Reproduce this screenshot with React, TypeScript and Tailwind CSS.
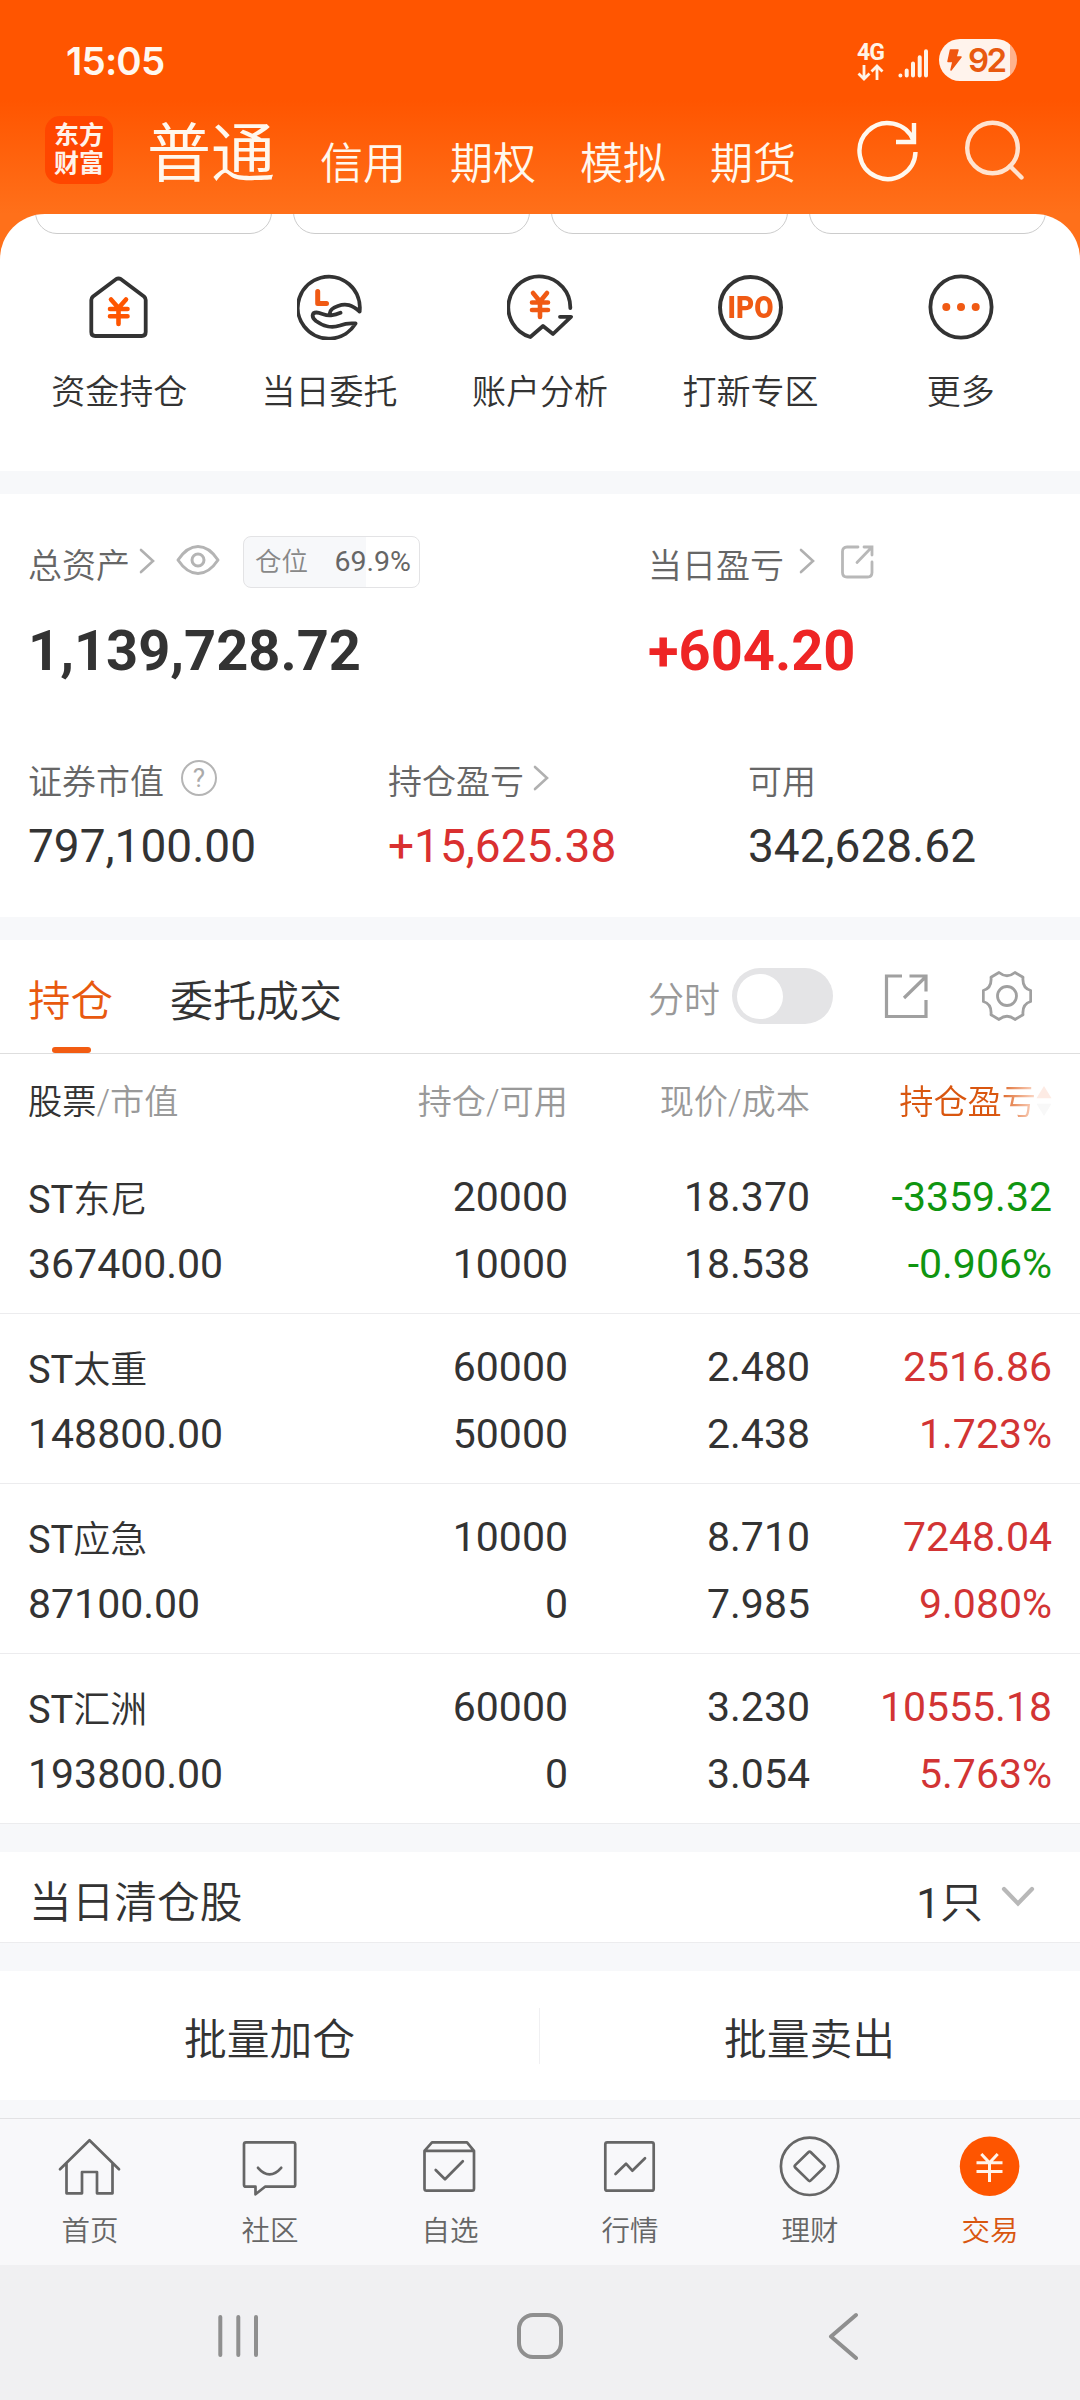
import React, { ReactNode } from 'react';

interface IconProps {
  className?: string;
}

interface Shortcut {
  label: string;
  icon: ReactNode;
}

interface Holding {
  name: string;
  marketValue: string;
  amount: string;
  available: string;
  price: string;
  cost: string;
  profit: string;
  rate: string;
}

const ChevronRight = ({ className }: IconProps) => (
  <svg className={className} width="16" height="26" viewBox="0 0 16 26" fill="none" stroke="#b0b0b0" strokeWidth="2.6" strokeLinecap="round">
    <path d="M2 2 14 13 2 24" />
  </svg>
);

const WalletIcon = () => (
  <svg width="66" height="66" viewBox="0 0 66 66" fill="none" strokeLinecap="round" strokeLinejoin="round">
    <path d="M30 5.2Q32.5 3.8 35 5.2L58 22.5Q59.7 24 59.7 26V58Q59.7 62 55.7 62H9.3Q5.3 62 5.3 58V26Q5.3 24 7 22.5Z" stroke="#333" strokeWidth="3.8" />
    <path d="M25 25.5 32.5 34 40 25.5M32.5 34V50M24 35H41.5M24 42.3H41.5" stroke="#fe5500" strokeWidth="4.6" />
  </svg>
);

const EntrustIcon = () => (
  <svg width="66" height="66" viewBox="0 0 66 66" fill="none" strokeLinecap="round" strokeLinejoin="round">
    <path
      d="M62.6 37.5A31 31 0 1 0 58.5 49.5C52 48.8 48 49.5 43 51.5C33 55 26 52 19 47C14 43 15 38.5 19.5 38.5C24 38.5 29 42.5 34 41.3Q39 40.8 43.5 38.8M33 40C32 36 37 33.5 41 32C49 29 55 31 62.6 37.5"
      stroke="#333"
      strokeWidth="3.8"
    />
    <path d="M20.7 17.5V29.4H29.5" stroke="#f05a14" strokeWidth="5" />
  </svg>
);

const AnalysisIcon = () => (
  <svg width="66" height="66" viewBox="0 0 66 66" fill="none" strokeLinecap="round" strokeLinejoin="round">
    <path d="M63.3 34A31 31 0 1 0 23.3 63L36 52 46 60 64 42.8H53" stroke="#333" strokeWidth="3.8" />
    <path d="M26 19 33 27.5 40 19M33 27.5V43M25 28.5H41M25 36H41" stroke="#f05a14" strokeWidth="4.6" />
  </svg>
);

const IpoIcon = () => (
  <div className="flex h-[65px] w-[65px] items-center justify-center rounded-full border-4 border-[#333]">
    <span className="scale-x-90 font-['Roboto'] text-[31px] leading-none font-black text-[#f05a14]">IPO</span>
  </div>
);

const MoreIcon = () => (
  <svg width="66" height="66" viewBox="0 0 66 66" fill="none">
    <circle cx="33" cy="33" r="30.6" stroke="#333" strokeWidth="3.8" />
    <g fill="#f05a14">
      <circle cx="18.3" cy="33" r="4" />
      <circle cx="33" cy="33" r="4" />
      <circle cx="47.7" cy="33" r="4" />
    </g>
  </svg>
);

const shortcuts: Shortcut[] = [
  { label: '资金持仓', icon: <WalletIcon /> },
  { label: '当日委托', icon: <EntrustIcon /> },
  { label: '账户分析', icon: <AnalysisIcon /> },
  { label: '打新专区', icon: <IpoIcon /> },
  { label: '更多', icon: <MoreIcon /> },
];

const holdings: Holding[] = [
  { name: '东尼', marketValue: '367400.00', amount: '20000', available: '10000', price: '18.370', cost: '18.538', profit: '-3359.32', rate: '-0.906%' },
  { name: '太重', marketValue: '148800.00', amount: '60000', available: '50000', price: '2.480', cost: '2.438', profit: '2516.86', rate: '1.723%' },
  { name: '应急', marketValue: '87100.00', amount: '10000', available: '0', price: '8.710', cost: '7.985', profit: '7248.04', rate: '9.080%' },
  { name: '汇洲', marketValue: '193800.00', amount: '60000', available: '0', price: '3.230', cost: '3.054', profit: '10555.18', rate: '5.763%' },
];

const tabIcon = (children: ReactNode) => (
  <svg width="64" height="64" viewBox="0 0 64 64" fill="none" stroke="#666" strokeWidth="2.7" strokeLinecap="round" strokeLinejoin="round">
    {children}
  </svg>
);

const tabs: Shortcut[] = [
  {
    label: '首页',
    icon: tabIcon(<path d="M2 35.3 31.5 6.3 61 35.3M8.5 29.5V59.3H24V38H39V59.3H54.5V29.5" />),
  },
  {
    label: '社区',
    icon: tabIcon(
      <>
        <path d="M8 8.3H55.2Q57.2 8.3 57.2 10.3V50.7Q57.2 52.7 55.2 52.7H27L17.5 60.3V52.7H8Q6 52.7 6 50.7V10.3Q6 8.3 8 8.3Z" />
        <path d="M20 33.8Q31.6 47 43.2 33.8" />
      </>
    ),
  },
  {
    label: '自选',
    icon: tabIcon(
      <>
        <path d="M6.5 16.8 14 8.3H49L56 16.8V54.5Q56 56.7 54 56.7H8.5Q6.5 56.7 6.5 54.5ZM6.5 16.8H56" />
        <path d="M17.7 36 27 45.3 44.8 27.3" />
      </>
    ),
  },
  {
    label: '行情',
    icon: tabIcon(
      <>
        <rect x="7.3" y="8.3" width="48.4" height="48.4" rx="2" />
        <path d="M17.5 40 28 29.7 34.3 36.7 47 24.3" />
      </>
    ),
  },
  {
    label: '理财',
    icon: tabIcon(
      <>
        <circle cx="31.6" cy="32.3" r="28.7" />
        <path d="M30.4 18.2Q31.6 17 32.8 18.2L46 31.1Q47.2 32.3 46 33.5L32.8 46.4Q31.6 47.6 30.4 46.4L17.2 33.5Q16 32.3 17.2 31.1Z" />
      </>
    ),
  },
  {
    label: '交易',
    icon: (
      <svg width="64" height="64" viewBox="0 0 64 64" fill="none">
        <circle cx="31.6" cy="32.3" r="29.8" fill="#fe5500" />
        <path d="M23.3 20 31.5 28.7 39.7 20M31.5 28.7V48M18.5 28.7H44.5M18.5 37.6H44.5" stroke="#fff3ea" strokeWidth="3" />
      </svg>
    ),
  },
];

const StatusBar = () => (
  <div className="flex h-[100px] justify-between pt-[39px] pr-[63px] pl-[66px]">
    <div className="pt-[1px] font-['Inter'] text-[38.5px] leading-[42px] font-semibold tracking-[-0.8px] text-[#fff8f0]">15:05</div>
    <div className="flex items-start">
      <div className="flex w-[27px] flex-col items-center pt-[5px] text-[#fff3e6]">
        <span className="font-['Roboto'] text-[23px] leading-[18px] font-bold tracking-[-1px]">4G</span>
        <svg className="mt-[2px]" width="27" height="17" viewBox="0 0 27 17" fill="none" stroke="currentColor" strokeWidth="2.8">
          <path d="M7 1V15M1.5 9.5 7 15 12.5 9.5M20 16V2M14.5 7.5 20 2 25.5 7.5" />
        </svg>
      </div>
      <svg className="mt-[10px] ml-[14px]" width="32" height="30" viewBox="0 0 32 30" stroke="#fff3e6" strokeWidth="4" strokeLinecap="round">
        <path d="M2.4 26.5V26.4M8.7 26.5V21.5M15 26.5V14.5M21.7 26.5V8.3M28 26.5V2.2" />
      </svg>
      <div className="ml-[9px] flex h-[42px] w-[78px] items-center overflow-hidden rounded-full bg-[linear-gradient(90deg,#fff3ec_71px,#ffb28c_71px)] pl-[7px]">
        <svg width="17" height="24" viewBox="0 0 17 24" fill="#f0560f" stroke="#f0560f" strokeWidth="1.5" strokeLinejoin="round">
          <path d="M4.5 2H12L10 9H15L5 22 7 13.5H2Z" />
        </svg>
        <span className="ml-[5px] font-['Inter'] text-[33px] leading-[42px] font-semibold tracking-[-2.5px] text-[#e8590f]">92</span>
      </div>
    </div>
  </div>
);

const Header = () => (
  <header className="h-[260px] bg-[linear-gradient(180deg,#ff5500_100px,#ff701a_214px)]">
    <StatusBar />
    <div className="flex h-[114px] pl-[45px] text-[#fff8ee]">
      <div className="mt-[16px] flex h-[68px] w-[68px] shrink-0 flex-col items-center justify-center rounded-[15px] bg-[#ff4600] text-[25px] leading-[28px] font-bold text-[#fff3ea]">
        <span>东方</span>
        <span>财富</span>
      </div>
      <div className="mt-[23px] ml-[34px] w-[129px] shrink-0 text-[64px] leading-[64px]">普通</div>
      <div className="mt-[42px] ml-[44px] flex shrink-0 gap-[44px] text-[43px] leading-[44px] font-[350]">
        <span>信用</span>
        <span>期权</span>
        <span>模拟</span>
        <span>期货</span>
      </div>
      <svg className="mt-[20px] ml-[61px] shrink-0" width="62" height="62" viewBox="0 0 62 62" fill="none" stroke="currentColor" strokeWidth="4.4">
        <path d="M58.5 32A28 28 0 1 1 56.5 20.6M57 3V22H39" />
      </svg>
      <svg className="mt-[20px] ml-[44px] shrink-0" width="64" height="62" viewBox="0 0 64 62" fill="none" stroke="#ffe3d0" strokeWidth="4.4" strokeLinecap="round">
        <circle cx="29.5" cy="28" r="25.3" />
        <path d="M47 46 58.5 57.5" />
      </svg>
    </div>
  </header>
);

const Shortcuts = () => (
  <section className="relative -mt-[46px] h-[257px] overflow-hidden rounded-t-[45px] bg-white">
    <div className="flex h-[20px] items-end gap-[21px] overflow-hidden pl-[35px]">
      {[0, 1, 2, 3].map((i) => (
        <div key={i} className="h-[60px] w-[237px] shrink-0 rounded-[22px] border border-[#ccc]" />
      ))}
    </div>
    <div className="grid grid-cols-5 pt-[40px] pr-[14px] pl-[14px]">
      {shortcuts.map((item) => (
        <div key={item.label} className="flex flex-col items-center">
          <div className="flex h-[66px] items-center">{item.icon}</div>
          <span className="mt-[35px] text-[34px] leading-[34px] font-[350] text-[#333]">{item.label}</span>
        </div>
      ))}
    </div>
  </section>
);

const Assets = () => (
  <section className="h-[423px] bg-white pt-[42px] pl-[28px]">
    <div className="flex">
      <div className="w-[620px]">
        <div className="flex h-[52px] items-center">
          <span className="pt-[7px] text-[34px] leading-none font-[350] text-[#666]">总资产</span>
          <ChevronRight className="mb-[2px] ml-[9px]" />
          <svg className="mb-[4px] ml-[21px]" width="44" height="32" viewBox="0 0 44 32" fill="none" stroke="#b4b4b4" strokeWidth="3">
            <path d="M2 16Q11 2.5 22 2.5T42 16Q33 29.5 22 29.5T2 16Z" strokeLinejoin="round" />
            <circle cx="22" cy="16" r="6" />
          </svg>
          <div className="ml-[23px] flex h-[52px] w-[177px] items-center justify-between rounded-[8px] border border-[#e3e3e5] bg-[linear-gradient(90deg,#f7f8fa_69.9%,#fff_69.9%)] pr-[8px] pl-[11px]">
            <span className="text-[26.5px] leading-none font-[350] text-[#888]">仓位</span>
            <span className="text-[28.5px] leading-none text-[#666]">69.9%</span>
          </div>
        </div>
        <div className="mt-[30px] text-[56px] leading-[66px] font-bold text-[#333]">1,139,728.72</div>
      </div>
      <div>
        <div className="flex h-[52px] items-center">
          <span className="pt-[7px] text-[34px] leading-none font-[350] text-[#666]">当日盈亏</span>
          <ChevronRight className="mb-[2px] ml-[15px]" />
          <svg className="ml-[25px]" width="34" height="34" viewBox="0 0 34 34" fill="none" stroke="#b8b8b8" strokeWidth="2.8" strokeLinecap="round">
            <path d="M18 2H7Q2.500 2 2.500 6.500V27.500Q2.500 32 7 32H27.500Q32 32 32 27.500V17M17 17.500 31 3M24 2H32V10" />
          </svg>
        </div>
        <div className="mt-[30px] text-[56px] leading-[66px] font-bold text-[#ee2525]">+604.20</div>
      </div>
    </div>
    <div className="mt-[77px] grid grid-cols-[360px_360px_1fr]">
      <div>
        <div className="flex h-[40px] items-center">
          <span className="pt-[2px] text-[34px] leading-none font-[350] text-[#666]">证券市值</span>
          <div className="mb-[6px] ml-[17px] flex h-[36px] w-[36px] items-center justify-center rounded-full border-[2.5px] border-[#b5b5b5] text-[26px] leading-none text-[#aaa]">?</div>
        </div>
        <div className="mt-[15px] text-[46px] leading-[60px] text-[#333]">797,100.00</div>
      </div>
      <div>
        <div className="flex h-[40px] items-center">
          <span className="pt-[2px] text-[34px] leading-none font-[350] text-[#666]">持仓盈亏</span>
          <ChevronRight className="mb-[6px] ml-[9px]" />
        </div>
        <div className="mt-[15px] text-[46px] leading-[60px] text-[#d93030]">+15,625.38</div>
      </div>
      <div>
        <div className="flex h-[40px] items-center">
          <span className="pt-[2px] text-[34px] leading-none font-[350] text-[#666]">可用</span>
        </div>
        <div className="mt-[15px] text-[46px] leading-[60px] text-[#333]">342,628.62</div>
      </div>
    </div>
  </section>
);

const PositionTabs = () => (
  <div className="flex h-[114px] border-b border-[#dedede] bg-white pl-[28px] whitespace-nowrap">
    <div className="relative h-[113px] w-[85px] pt-[40px] text-[42.5px] leading-[44px] font-[350] text-[#e8590f]">
      持仓
      <div className="absolute bottom-0 left-[24px] h-[6px] w-[39px] rounded-full bg-[#f25c12]" />
    </div>
    <div className="ml-[57px] w-[172px] pt-[40px] text-[43px] leading-[44px] font-[350] text-[#333]">委托成交</div>
    <div className="ml-[306px] pt-[41px] text-[36px] leading-[40px] font-[350] text-[#999]">分时</div>
    <div className="mt-[28px] ml-[12px] flex h-[56px] w-[101px] items-center rounded-full bg-[#e4e4e6] pl-[5px]">
      <div className="h-[45px] w-[46px] rounded-full bg-white" />
    </div>
    <svg className="mt-[33px] ml-[51px]" width="44" height="46" viewBox="0 0 44 46" fill="none" stroke="#a0a0a0" strokeWidth="3.2">
      <path d="M18 3H2.500V43.500H42V27M25.500 3H42V18.500M20 25 41 4.500" />
    </svg>
    <svg className="mt-[31px] ml-[54px]" width="50" height="50" viewBox="0 0 50 50" fill="none" stroke="#a0a0a0" strokeWidth="2.8" strokeLinejoin="round">
      <path d="M17 1.500Q25 8 33 1.500L41 6.300Q40 17 48.700 19.500V30.500Q40 33 41 43.700L33 48.500Q25 42 17 48.500L9 43.700Q10 33 1.300 30.500V19.500Q10 17 9 6.300Z" />
      <circle cx="25" cy="25" r="9.500" />
    </svg>
  </div>
);

const HoldingsTable = () => (
  <section className="bg-white">
    <div className="grid h-[90px] grid-cols-[299px_241px_242px_242px] pt-[30px] pl-[28px] text-[34.2px] leading-[36px] font-[350] text-[#999]">
      <div>
        <span className="text-[#333]">股票</span>/市值
      </div>
      <div className="text-right">持仓/可用</div>
      <div className="text-right">现价/成本</div>
      <div className="flex items-start justify-end">
        <div className="bg-[linear-gradient(90deg,#d9560f_97px,#ffe4d8_140px)] bg-clip-text text-transparent">持仓盈亏</div>
        <svg width="16" height="34" viewBox="0 0 17 34">
          <path d="M8.500 1 16.500 14H0.500Z" fill="#fdebe4" />
          <path d="M8.500 33 16.500 20H0.500Z" fill="#f8f8f8" />
        </svg>
      </div>
    </div>
    {holdings.map((row) => (
      <div
        key={row.name}
        className="grid h-[170px] grid-cols-[299px_241px_242px_242px] border-b border-[#ececee] pt-[20px] pl-[28px] text-[41px] leading-[67px] text-[#333]"
      >
        <div>
          <div className="h-[67px] pt-[3px] text-[38px]">
            ST<span className="text-[37px] font-[350]">{row.name}</span>
          </div>
          <div>{row.marketValue}</div>
        </div>
        <div className="text-right">
          <div>{row.amount}</div>
          <div>{row.available}</div>
        </div>
        <div className="text-right">
          <div>{row.price}</div>
          <div>{row.cost}</div>
        </div>
        <div className={row.profit.startsWith('-') ? 'text-right text-[#109510]' : 'text-right text-[#d23434]'}>
          <div>{row.profit}</div>
          <div>{row.rate}</div>
        </div>
      </div>
    ))}
  </section>
);

const TabBar = () => (
  <nav className="grid h-[147px] grid-cols-6 border-t border-[#e2e2e4] bg-[#f8f8fa] pt-[15px]">
    {tabs.map((tab) => (
      <div key={tab.label} className="flex flex-col items-center">
        {tab.icon}
        <span className={tab.label === '交易' ? 'mt-[19px] text-[28.5px] leading-[30px] font-[350] text-[#d9560f]' : 'mt-[19px] text-[28.5px] leading-[30px] font-[350] text-[#666]'}>
          {tab.label}
        </span>
      </div>
    ))}
  </nav>
);

const SystemNav = () => (
  <div className="flex h-[135px] items-center bg-[#f0f0f2] pt-[6px] pl-[217px]">
    <svg width="43" height="46" viewBox="0 0 43 46" stroke="#8f8f8f" strokeWidth="4" strokeLinecap="round">
      <path d="M3.300 4V42M21.300 4V42M39 4V42" />
    </svg>
    <div className="ml-[257px] h-[46px] w-[46px] rounded-[16px] border-4 border-[#8f8f8f]" />
    <svg className="ml-[265px]" width="31" height="48" viewBox="0 0 31 48" fill="none" stroke="#8f8f8f" strokeWidth="4" strokeLinecap="round" strokeLinejoin="round">
      <path d="M28 3 3 24.500 28 46" />
    </svg>
  </div>
);

const App: React.FC = () => {
  return (
    <div className="h-[2400px] w-[1080px] overflow-hidden bg-[#f7f8fa] font-['Roboto','Noto_Sans_CJK_SC',sans-serif]">
      <Header />
      <Shortcuts />
      <div className="h-[23px]" />
      <Assets />
      <div className="h-[23px]" />
      <PositionTabs />
      <HoldingsTable />

      <div className="mt-[28px] flex h-[91px] items-center border-b border-[#ececee] bg-white pl-[29px] text-[42.7px] leading-none font-[350] text-[#333]">
        <span className="pt-[12px]">当日清仓股</span>
        <span className="ml-auto pt-[12px]">
          <span className="font-normal">1</span>只
        </span>
        <svg className="mr-[45px] ml-[18px]" width="34" height="22" viewBox="0 0 34 22" fill="none" stroke="#b8b8b8" strokeWidth="4.2" strokeLinecap="round">
          <path d="M3 3 17 17.500 31 3" />
        </svg>
      </div>

      <div className="mt-[28px] flex h-[129px] items-center bg-white pr-[1px] text-[42.8px] leading-none font-[350] text-[#333]">
        <div className="flex-1 pt-[9px] text-center">批量加仓</div>
        <div className="h-[56px] w-px bg-[#f0f0f2]" />
        <div className="flex-1 pt-[9px] text-center">批量卖出</div>
      </div>
      <div className="h-[18px]" />
      <TabBar />
      <SystemNav />
    </div>
  );
};

export default App;
